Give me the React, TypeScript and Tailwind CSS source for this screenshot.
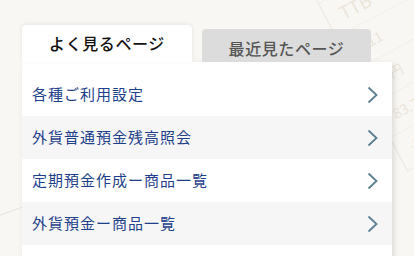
const links = [
  "各種ご利用設定",
  "外貨普通預金残高照会",
  "定期預金作成ー商品一覧",
  "外貨預金ー商品一覧",
  "",
];

const sheetRows = [
  { text: "2月27日 09:50", size: "text-[12px]" },
  { text: "TTB", size: "text-[18px]" },
  { text: "1 11", size: "text-[14px]" },
  { text: "95円", size: "text-[14px]" },
  { text: "83.77", size: "text-[14px]" },
  { text: "七", size: "text-[14px]" },
];

function Chevron() {
  return (
    <svg width="11" height="18" viewBox="0 0 11 18" fill="none" className="text-[#5b7f90]">
      <path d="M1.5 1.5 L9.5 9 L1.5 16.5" stroke="currentColor" strokeWidth="1.8" />
    </svg>
  );
}

function BackgroundSheet() {
  // faint tilted statement sheet behind the card
  return (
    <div className="pointer-events-none absolute left-[300px] top-[-30px] w-[260px] origin-top-left rotate-[-28deg] border-l border-t border-[#ebe6df] text-[#ebe5dc]">
      <div className="flex flex-col">
        {sheetRows.map((r) => (
          <div key={r.text} className={`flex h-[38px] items-center border-b border-[#f3efe9] pl-[14px] ${r.size}`}>
            {r.text}
          </div>
        ))}
      </div>
    </div>
  );
}

export default function App() {
  return (
    <div
      className="relative h-[256px] w-[414px] overflow-hidden bg-[#f9f7f3]"
      style={{ fontFamily: '"Noto Sans CJK JP", "Noto Sans", sans-serif' }}
    >
      <BackgroundSheet />
      <div className="pointer-events-none absolute left-[-20px] top-[222px] h-px w-[120px] origin-left rotate-[-20deg] bg-[#e6e1da]" />
      <div className="relative pl-[22px] pt-[25px]">
        <div className="flex items-end gap-[10px]">
          <div className="flex h-[37px] w-[170px] items-center justify-center rounded-t-[4px] bg-white pb-[1px] text-[16px] font-medium tracking-[0.6px] text-[#111] shadow-[0_-1px_4px_rgba(0,0,0,0.08)]">
            よく見るページ
          </div>
          <div className="flex h-[33px] w-[169px] items-center justify-center rounded-t-[4px] bg-[#dcdcdc] pt-[4px] text-[16px] font-medium tracking-[0.6px] text-[#555]">
            最近見たページ
          </div>
        </div>
        <div className="w-[370px] bg-white pt-[11px] shadow-[2px_2px_6px_rgba(0,0,0,0.12)]">
          {links.map((label, i) => (
            <div
              key={i}
              className={`flex h-[43px] items-center justify-between pl-[10px] pr-[14px] ${
                i % 2 === 1 ? "bg-[#f6f6f7]" : "bg-white"
              }`}
            >
              <span className="text-[15px] tracking-[1px] text-[#1e3f8a]">{label}</span>
              {label && <Chevron />}
            </div>
          ))}
        </div>
      </div>
    </div>
  );
}
